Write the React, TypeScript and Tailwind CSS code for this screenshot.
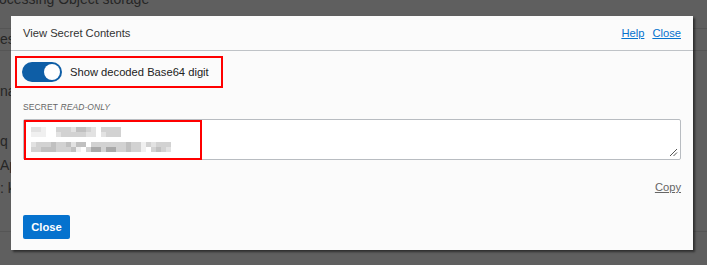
import React from 'react';

// pixelated placeholder for the redacted secret value
const shade: Record<string, string> = {
  '0': 'bg-transparent',
  '1': 'bg-[#f0f0f0]',
  '2': 'bg-[#e2e2e2]',
  '3': 'bg-[#d2d2d2]',
  '4': 'bg-[#c0c0c0]',
  '5': 'bg-[#a9a9a9]',
};

const secretRows = [
  ['22100333244320333300', '11100233333220233300'],
  ['23334334244033333334331323330', '33444333410355355334331034320'],
];

const PixelRow: React.FC<{ cells: string }> = ({ cells }) => (
  <div className="flex">
    {cells.split('').map((c, i) => (
      <div key={i} className={`w-[5px] h-[5px] ${shade[c]}`} />
    ))}
  </div>
);

// page behind the modal overlay, only its left edge peeks out
const Backdrop: React.FC = () => (
  <div className="flex flex-col text-[14px] text-[#262626] whitespace-nowrap">
    <div className="h-[29px] border-b border-[#555]">
      <div className="-mt-[11px] -ml-[15px]">Processing Object storage</div>
    </div>
    <div className="h-[22px] border-b border-[#555] flex items-center">es</div>
    <div className="h-[78px] flex items-start pt-[30px]">nat</div>
    <div className="h-[24px] flex items-center">q</div>
    <div className="h-[24px] flex items-center">Ap</div>
    <div className="h-[22px] flex items-center">: k</div>
    <div className="h-[33px] border-b border-[#555]" />
  </div>
);

export default function App() {
  return (
    <div className="relative w-[707px] h-[265px] overflow-hidden bg-[#5f5f5f] font-['Liberation_Sans',Arial,sans-serif]">
      <Backdrop />

      <div className="absolute left-[11px] top-[16px] w-[682px] h-[234px] bg-[#fbfbfb] shadow-[2px_2px_2px_rgba(0,0,0,0.5)] flex flex-col">
        <header className="h-[35px] flex items-center justify-between px-3 border-b border-[#bfc3c7]">
          <span className="text-[11.2px] text-[#333]">View Secret Contents</span>
          <div className="flex gap-2 text-[11.2px] text-[#0572ce]">
            <a className="underline cursor-pointer">Help</a>
            <a className="underline cursor-pointer">Close</a>
          </div>
        </header>

        <div className="flex flex-col px-3">
          <div className="-ml-2 mt-[5px] w-[208px] h-[32px] border-2 border-[#f00] flex items-center pl-[5px] gap-2">
            <div className="w-[40px] h-[20px] rounded-full bg-[#0e5ea6] flex items-center justify-end pr-[2px]">
              <div className="w-[16px] h-[16px] rounded-full bg-white" />
            </div>
            <span className="text-[11.2px] text-[#222]">Show decoded Base64 digit</span>
          </div>

          <div className="mt-[14px] h-[10px] leading-[10px] text-[8.5px] text-[#666] tracking-[0.1px]">
            SECRET <i>READ-ONLY</i>
          </div>

          <div className="relative mt-[7px] h-[41px] bg-white border border-[#b8bcc1] rounded-[2px]">
            <div className="w-[178px] h-[40px] border-2 border-[#f00] pl-[5px] pt-[5px] flex flex-col gap-[5px]">
              {secretRows.map((rows, i) => (
                <div key={i}>
                  {rows.map((r, j) => (
                    <PixelRow key={j} cells={r} />
                  ))}
                </div>
              ))}
            </div>
            <svg className="absolute right-[2px] bottom-[2px]" width="9" height="9" viewBox="0 0 9 9">
              <path d="M1 8 L8 1 M4.5 8 L8 4.5" stroke="#555" strokeWidth="1" />
            </svg>
          </div>

          <div className="mt-[21px] flex justify-end">
            <a className="text-[11.2px] leading-[13px] text-[#666] underline cursor-pointer">Copy</a>
          </div>

          <div className="mt-[20px]">
            <button className="w-[47px] h-[24px] rounded-[2px] bg-[#0572ce] text-white text-[11.2px] font-bold">
              Close
            </button>
          </div>
        </div>
      </div>
    </div>
  );
}
